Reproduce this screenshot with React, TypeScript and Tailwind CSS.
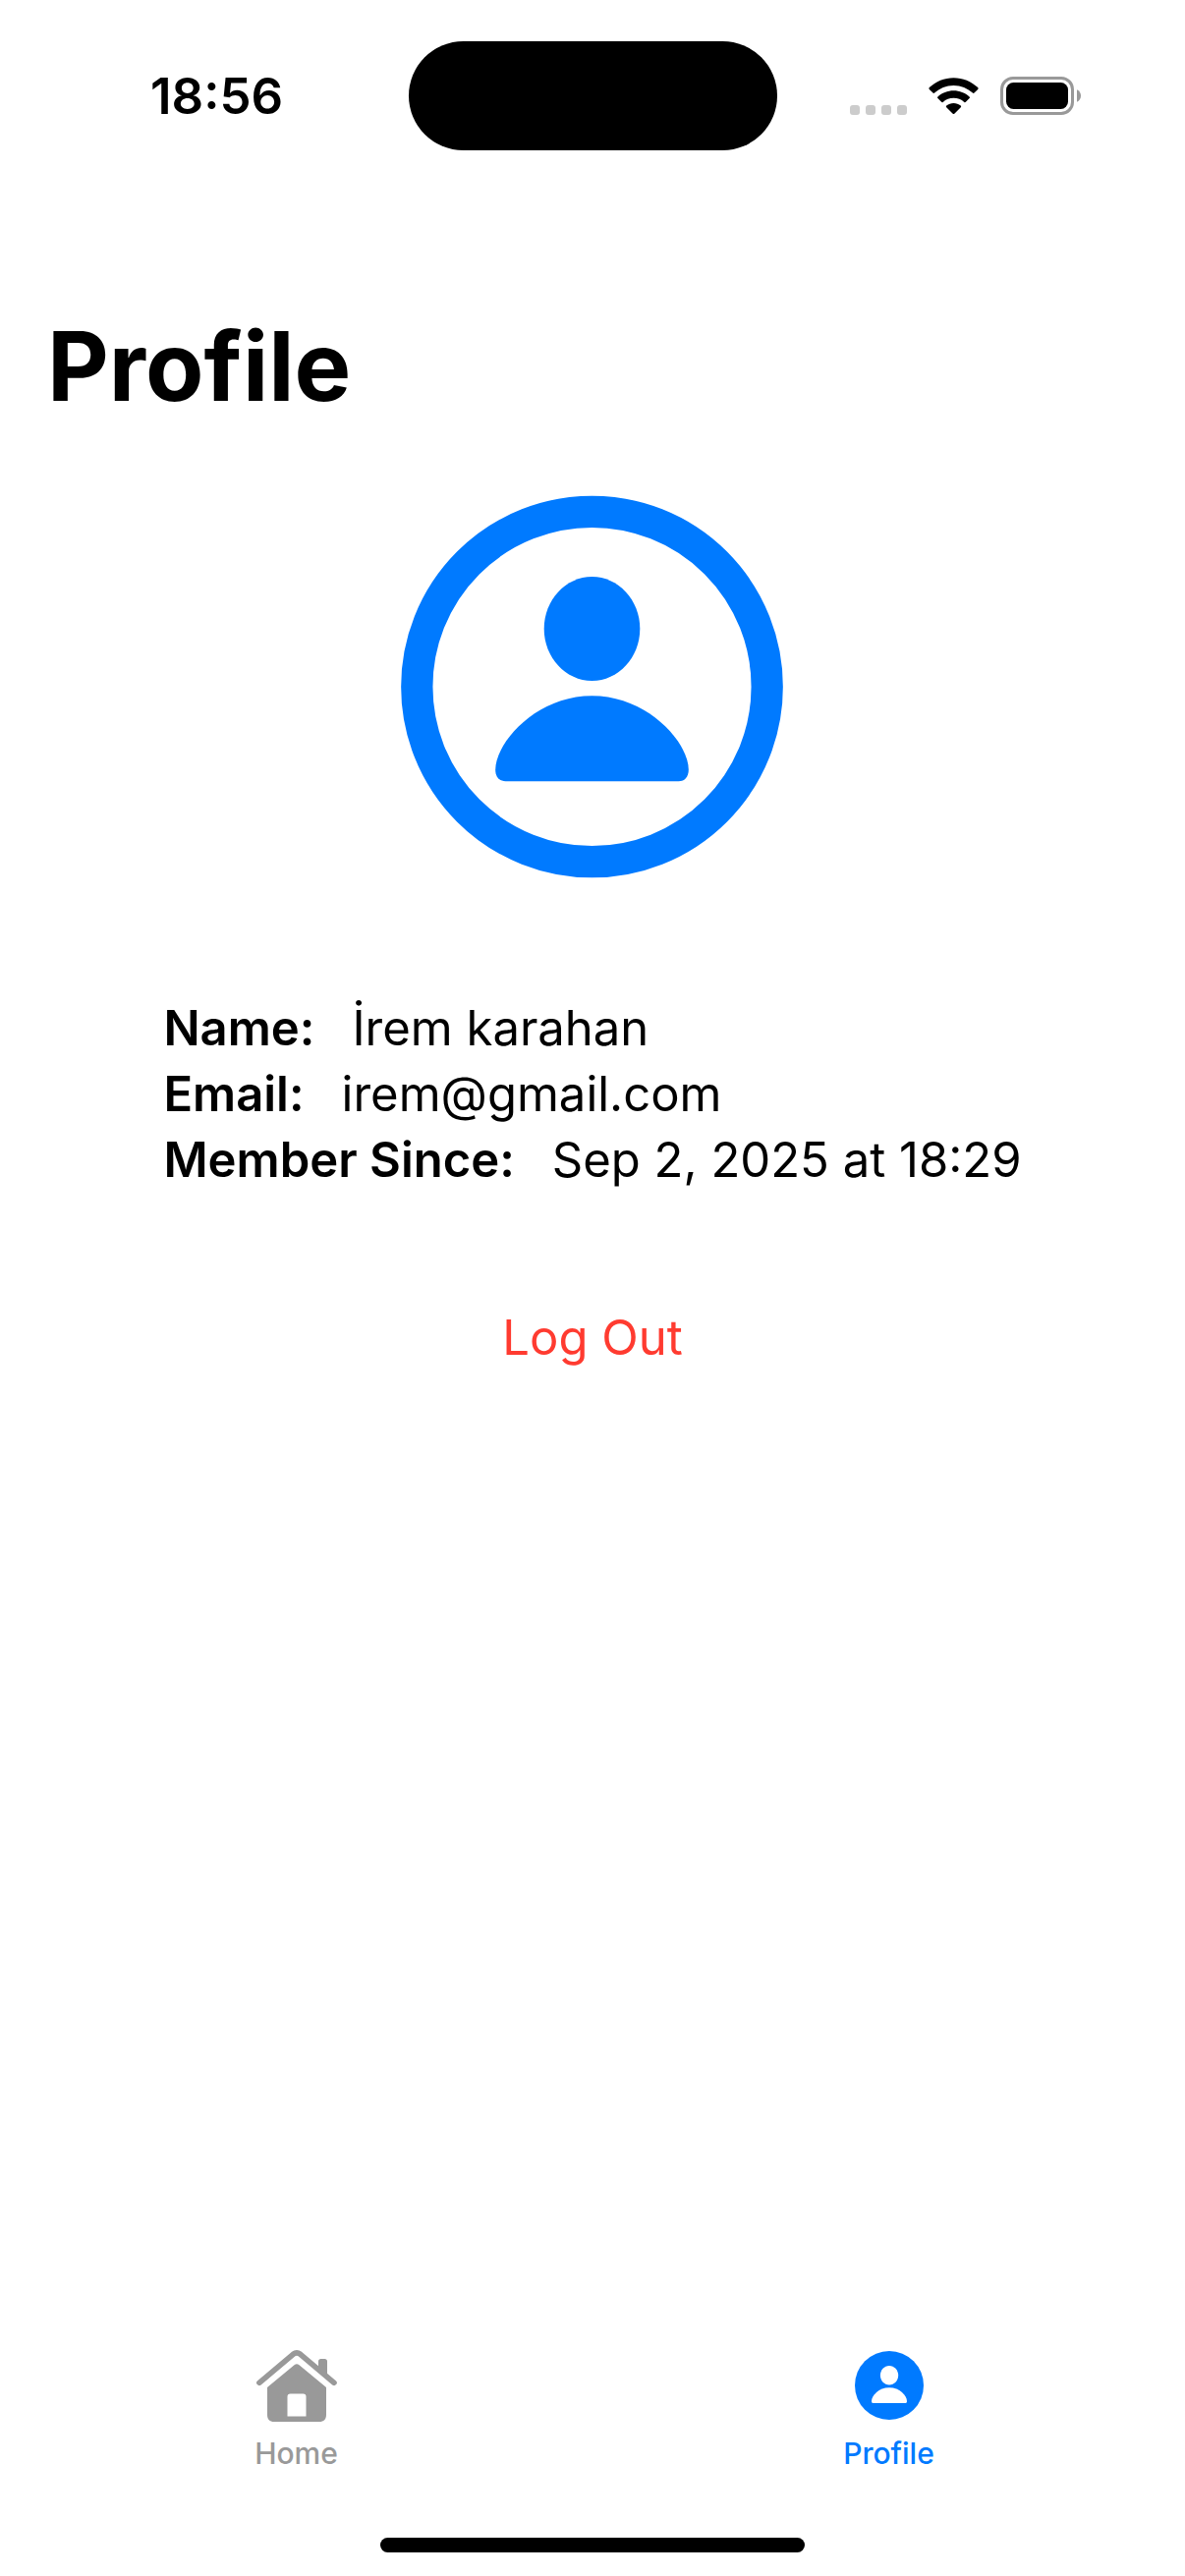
import React, { useState } from "react";

function WifiIcon() {
  return (
    <svg viewBox="0 0 51 38" className="h-[38px] w-[51px]" fill="black" aria-hidden="true">
      <path d="M25.500 8C33 8 39.800 10.900 44.900 15.600C45.400 16.100 46.100 16.100 46.500 15.600L50.200 11.900C50.700 11.400 50.700 10.600 50.200 10.100C43.500 3.800 34.900 0.200 25.500 0.200C16.100 0.200 7.500 3.800 0.800 10.100C0.300 10.600 0.300 11.400 0.800 11.900L4.500 15.600C4.900 16.100 5.600 16.100 6.100 15.600C11.200 10.900 18 8 25.500 8Z" />
      <path d="M25.500 20.800C29.600 20.800 33.400 22.300 36.300 24.900C36.800 25.300 37.400 25.300 37.900 24.800L41.600 21.100C42.100 20.600 42.100 19.900 41.600 19.400C37.300 15.500 31.600 13.200 25.500 13.200C19.400 13.200 13.700 15.500 9.400 19.400C8.900 19.900 8.900 20.600 9.400 21.100L13.100 24.800C13.600 25.300 14.200 25.300 14.700 24.900C17.600 22.300 21.400 20.800 25.500 20.800Z" />
      <path d="M32.800 30.200C33.300 29.700 33.300 28.900 32.700 28.500C30.700 27 28.200 26.100 25.500 26.100C22.800 26.100 20.300 27 18.300 28.500C17.700 28.900 17.700 29.700 18.200 30.200L24.700 36.700C25.200 37.200 25.800 37.200 26.300 36.700Z" />
    </svg>
  );
}

function BatteryIcon() {
  return (
    <svg viewBox="0 0 82 39" className="h-[39px] w-[82px]" aria-hidden="true">
      <rect x="1.500" y="1.500" width="72" height="36" rx="11.500" fill="none" stroke="#999999" strokeWidth="3" />
      <rect x="6" y="6" width="63" height="27" rx="7.500" fill="black" />
      <path d="M78 13.200C80.500 14.200 82 16.700 82 19.500C82 22.300 80.500 24.800 78 25.800Z" fill="#999999" />
    </svg>
  );
}

function AvatarIcon() {
  return (
    <svg viewBox="0 0 390 390" className="size-[390px]" fill="#007aff" role="img" aria-label="Avatar">
      <circle cx="194.500" cy="195" r="178.200" fill="none" stroke="#007aff" strokeWidth="32.300" />
      <path d="M194.500 83C221 83 243.300 106.500 243.300 136C243.300 165.500 221 189 194.500 189C168 189 145.700 165.500 145.700 136C145.700 106.500 168 83 194.500 83Z" />
      <path d="M194.500 204.300C251.500 204.300 292.800 252 292.800 279.500C292.800 286.500 289 291.300 282.500 291.300H106.500C100 291.300 96.200 286.500 96.200 279.500C96.200 252 137.500 204.300 194.500 204.300Z" />
    </svg>
  );
}

function HomeIcon() {
  return (
    <svg viewBox="0 0 82 74" className="h-[74px] w-[82px]" aria-hidden="true">
      <path d="M2.900 34.300L37.300 5.300Q41 2.400 44.700 5.300L79 34.300" fill="none" stroke="currentColor" strokeWidth="5.600" strokeLinecap="round" strokeLinejoin="round" />
      <path d="M63 20V12.500C63 11 64 10 65.500 10H69.500C71 10 72 11 72 12.500V28Z" fill="currentColor" />
      <path
        fillRule="evenodd"
        fill="currentColor"
        d="M11 39L38.500 16.300Q41 14.300 43.500 16.300L71 39V67C71 71.500 68.500 74 64 74H18C13.500 74 11 71.500 11 67ZM31.500 68.500H50.500V48.500C50.500 46.500 49.500 45.500 47.500 45.500H34.500C32.500 45.500 31.500 46.500 31.500 48.500Z"
      />
    </svg>
  );
}

function ProfileIcon() {
  return (
    <svg viewBox="0 0 70 70" className="size-[70px]" aria-hidden="true">
      <circle cx="35" cy="35" r="35" fill="currentColor" />
      <path d="M35 15C40 15 44.200 19.300 44.200 24.700C44.200 30.100 40 34.500 35 34.500C30 34.500 25.900 30.100 25.900 24.700C25.900 19.300 30 15 35 15Z" fill="white" />
      <path d="M35 37.200C45.500 37.200 53 45.300 53 51C53 52.400 52.400 53 51.200 53H18.800C17.600 53 17 52.400 17 51C17 45.300 24.500 37.200 35 37.200Z" fill="white" />
    </svg>
  );
}

const details = [
  { label: "Name:", value: "İrem karahan" },
  { label: "Email:", value: "irem@gmail.com" },
  { label: "Member Since:", value: "Sep 2, 2025 at 18:29" },
];

const tabs = [
  { name: "Home", Icon: HomeIcon },
  { name: "Profile", Icon: ProfileIcon },
];

export default function App() {
  const [active, setActive] = useState("Profile");
  return (
    <div className="flex min-h-screen flex-col bg-white font-['Inter',sans-serif] text-black">
      <header className="grid grid-cols-[1fr_auto_1fr] items-center pt-[42px]">
        <div className="pl-[153px] text-[51px] leading-[60px] font-semibold">18:56</div>
        <div className="h-[111px] w-[375px] rounded-[56px] bg-black" />
        <div className="flex items-center justify-end gap-[22px] pr-[106px]">
          <div className="flex h-[38px] items-end gap-[6px]">
            <span className="size-[10px] rounded-[3px] bg-[#cccccc]" />
            <span className="size-[10px] rounded-[3px] bg-[#cccccc]" />
            <span className="size-[10px] rounded-[3px] bg-[#cccccc]" />
            <span className="size-[10px] rounded-[3px] bg-[#cccccc]" />
          </div>
          <WifiIcon />
          <BatteryIcon />
        </div>
      </header>

      <main className="flex flex-1 flex-col items-center pt-[160px]">
        <h1 className="self-start px-12 text-[97px] leading-[120px] font-bold">Profile</h1>
        <div className="mt-[71px]">
          <AvatarIcon />
        </div>
        <dl className="mt-[119px] text-[49px] leading-[67px]">
          {details.map((d) => (
            <div key={d.label} className="flex gap-[38px]">
              <dt className="font-semibold">{d.label}</dt>
              <dd>{d.value}</dd>
            </div>
          ))}
        </dl>
        <button type="button" className="mt-[114px] text-[49px] leading-[67px] text-[#ff3b30]">
          Log Out
        </button>
      </main>

      <nav className="grid grid-cols-2">
        {tabs.map(({ name, Icon }) => (
          <button
            key={name}
            type="button"
            aria-current={active === name ? "page" : undefined}
            onClick={() => setActive(name)}
            className={
              "flex flex-col items-center gap-[14px] text-[30px] leading-[36px] font-medium " +
              (active === name ? "text-[#007aff]" : "text-[#999999]")
            }
          >
            <span className="flex h-[74px] items-center">
              <Icon />
            </span>
            {name}
          </button>
        ))}
      </nav>
      <div className="flex justify-center pt-[68px] pb-6">
        <div className="h-[15px] w-[432px] rounded-full bg-black" />
      </div>
    </div>
  );
}
